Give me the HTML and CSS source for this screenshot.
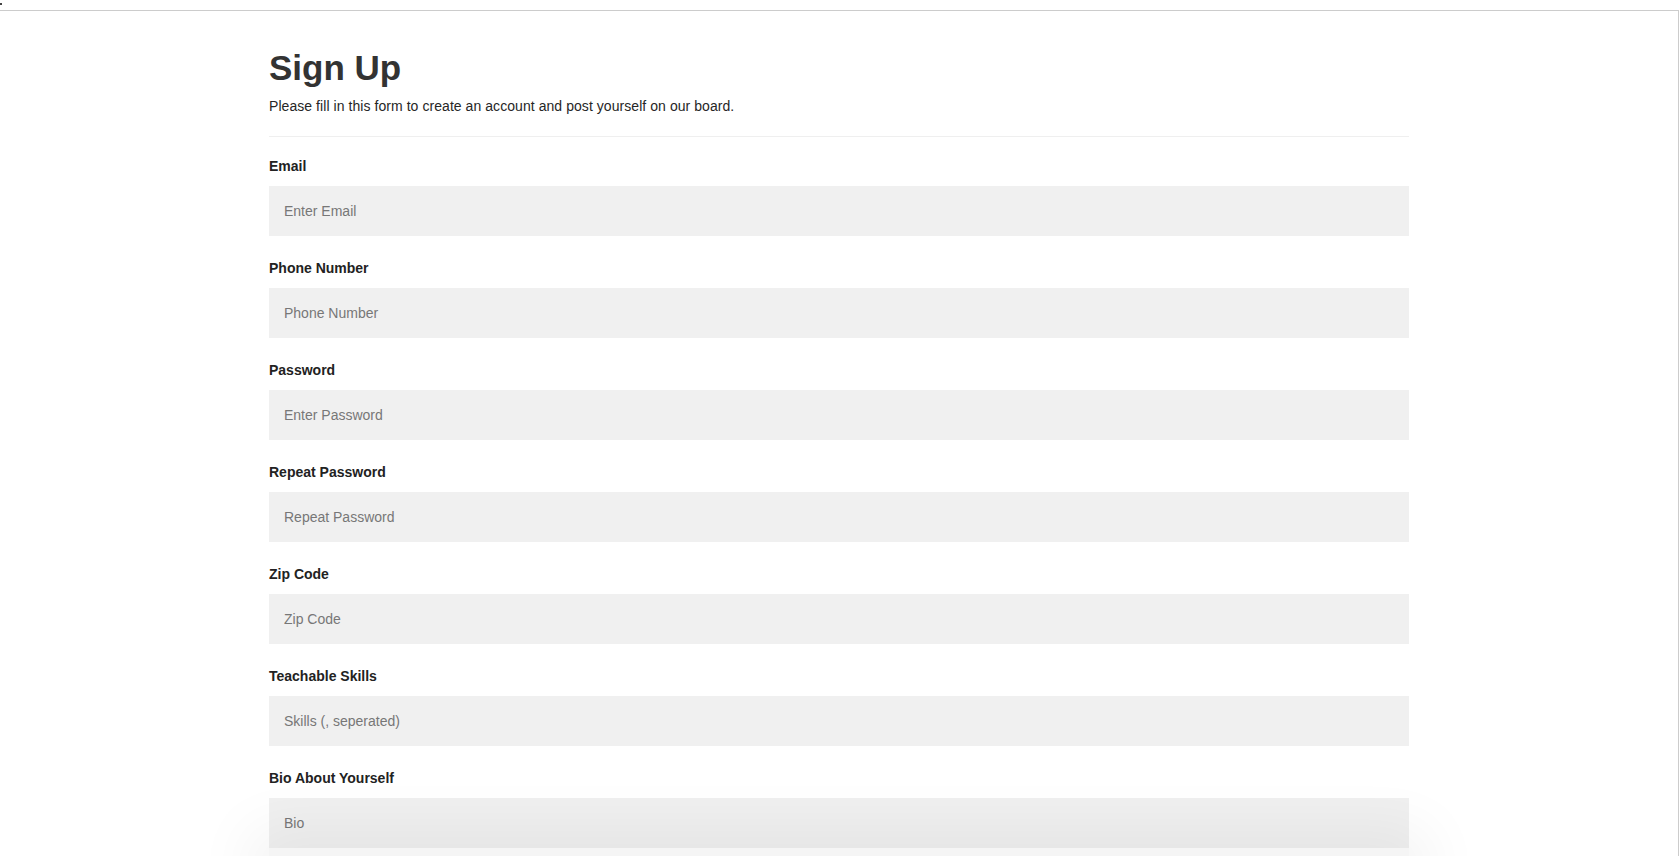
FILE: index.html
```html
<!DOCTYPE html>
<html lang="en">
<head>
<meta charset="utf-8">
<title>Sign Up</title>
<link rel="stylesheet" href="styles.css">
</head>
<body>
<div class="topbar"><span class="dot"></span></div>
<div class="frame">
  <form class="container">
    <h1 class="title">Sign Up</h1>
    <p class="intro">Please fill in this form to create an account and post yourself on our board.</p>
    <hr class="divider">
    <div class="field">
      <label class="label" for="email">Email</label>
      <input class="input" id="email" type="text" placeholder="Enter Email">
    </div>
    <div class="field">
      <label class="label" for="phone">Phone Number</label>
      <input class="input" id="phone" type="text" placeholder="Phone Number">
    </div>
    <div class="field">
      <label class="label" for="psw">Password</label>
      <input class="input" id="psw" type="password" placeholder="Enter Password">
    </div>
    <div class="field">
      <label class="label" for="psw-repeat">Repeat Password</label>
      <input class="input" id="psw-repeat" type="password" placeholder="Repeat Password">
    </div>
    <div class="field">
      <label class="label" for="zip">Zip Code</label>
      <input class="input" id="zip" type="text" placeholder="Zip Code">
    </div>
    <div class="field">
      <label class="label" for="skills">Teachable Skills</label>
      <input class="input" id="skills" type="text" placeholder="Skills (, seperated)">
    </div>
    <div class="field field-last">
      <label class="label" for="bio">Bio About Yourself</label>
      <input class="input" id="bio" type="text" placeholder="Bio">
    </div>
    <div class="below"></div>
  </form>
</div>
</body>
</html>
```

FILE: styles.css
```css
* { box-sizing: border-box; }

html, body {
  margin: 0;
  padding: 0;
  background: #ffffff;
  font-family: "Liberation Sans", Arial, Helvetica, sans-serif;
  color: #222;
  overflow: hidden;
}

.topbar {
  height: 10px;
  padding-top: 3px;
}

.dot {
  display: block;
  width: 2px;
  height: 2px;
  background: #444;
}

.frame {
  border-top: 1px solid #cccccc;
  border-right: 1px solid #cccccc;
  min-height: 900px;
}

.container {
  width: 1140px;
  margin: 0 auto;
  padding-top: 37px;
}

.title {
  margin: 0;
  font-size: 35px;
  line-height: 40px;
  font-weight: bold;
  color: #333;
}

.intro {
  margin: 8px 0 0;
  font-size: 14px;
  line-height: 20px;
  letter-spacing: 0.06px;
  color: #262626;
}

.divider {
  margin: 20px 0 19px;
  border: 0;
  border-top: 1px solid #efefef;
  height: 0;
}

.field {
  display: flex;
  flex-direction: column;
  margin-bottom: 22px;
}

.field-last {
  margin-bottom: 0;
}

.label {
  font-size: 14px;
  line-height: 20px;
  font-weight: bold;
  color: #222;
  margin-bottom: 10px;
}

.input {
  display: block;
  width: 100%;
  height: 50px;
  padding: 0 15px;
  border: none;
  outline: none;
  background: #f0f0f0;
  font-family: "Liberation Sans", Arial, Helvetica, sans-serif;
  font-size: 14px;
  color: #222;
}

.input::placeholder {
  color: #777;
}

.below {
  position: relative;
  height: 40px;
  background: #f5f5f5;
  box-shadow: 0 0 60px 20px rgba(0, 0, 0, 0.05);
}
```
